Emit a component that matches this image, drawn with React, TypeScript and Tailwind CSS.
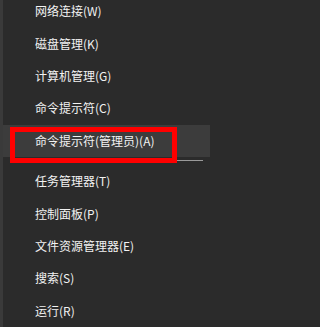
import React from 'react';

const topItems = ['网络连接(W)', '磁盘管理(K)', '计算机管理(G)', '命令提示符(C)', '命令提示符(管理员)(A)'];
const bottomItems = ['任务管理器(T)', '控制面板(P)', '文件资源管理器(E)', '搜索(S)', '运行(R)'];

const Row: React.FC<{ label: string; active?: boolean }> = ({ label, active }) => (
  <div className={`h-[33px] flex items-center pl-[32px] ${active ? 'bg-[#3c3c3c]' : ''}`}>
    <span className="text-[12px] leading-none text-[#f2f2f2]">{label}</span>
  </div>
);

const App: React.FC = () => {
  return (
    <div className="min-h-screen w-full bg-[#2b2b2b]">
      <div
        className="relative w-[210px] h-[327px] overflow-hidden bg-[#2b2b2b]"
        style={{ fontFamily: '"Noto Sans CJK SC", "Noto Sans", sans-serif' }}
      >
        <div className="flex h-full">
          <div className="w-[3px] shrink-0 bg-[#3a3a3a]" />
          <div className="flex-1 flex flex-col -mt-[5px]">
            {topItems.map((t, i) => (
              <Row key={t} label={t} active={i === topItems.length - 1} />
            ))}
            <div className="pt-[3px] pb-[4px] pl-[8px] pr-[7px]">
              <div className="h-px bg-[#9a9a9a]" />
            </div>
            {bottomItems.map((t) => (
              <Row key={t} label={t} />
            ))}
          </div>
        </div>
        {/* red annotation box */}
        <div className="absolute left-[10px] top-[127px] w-[167px] h-[36px] border-[5px] border-[#ff0000]" />
      </div>
    </div>
  );
};

export default App;
